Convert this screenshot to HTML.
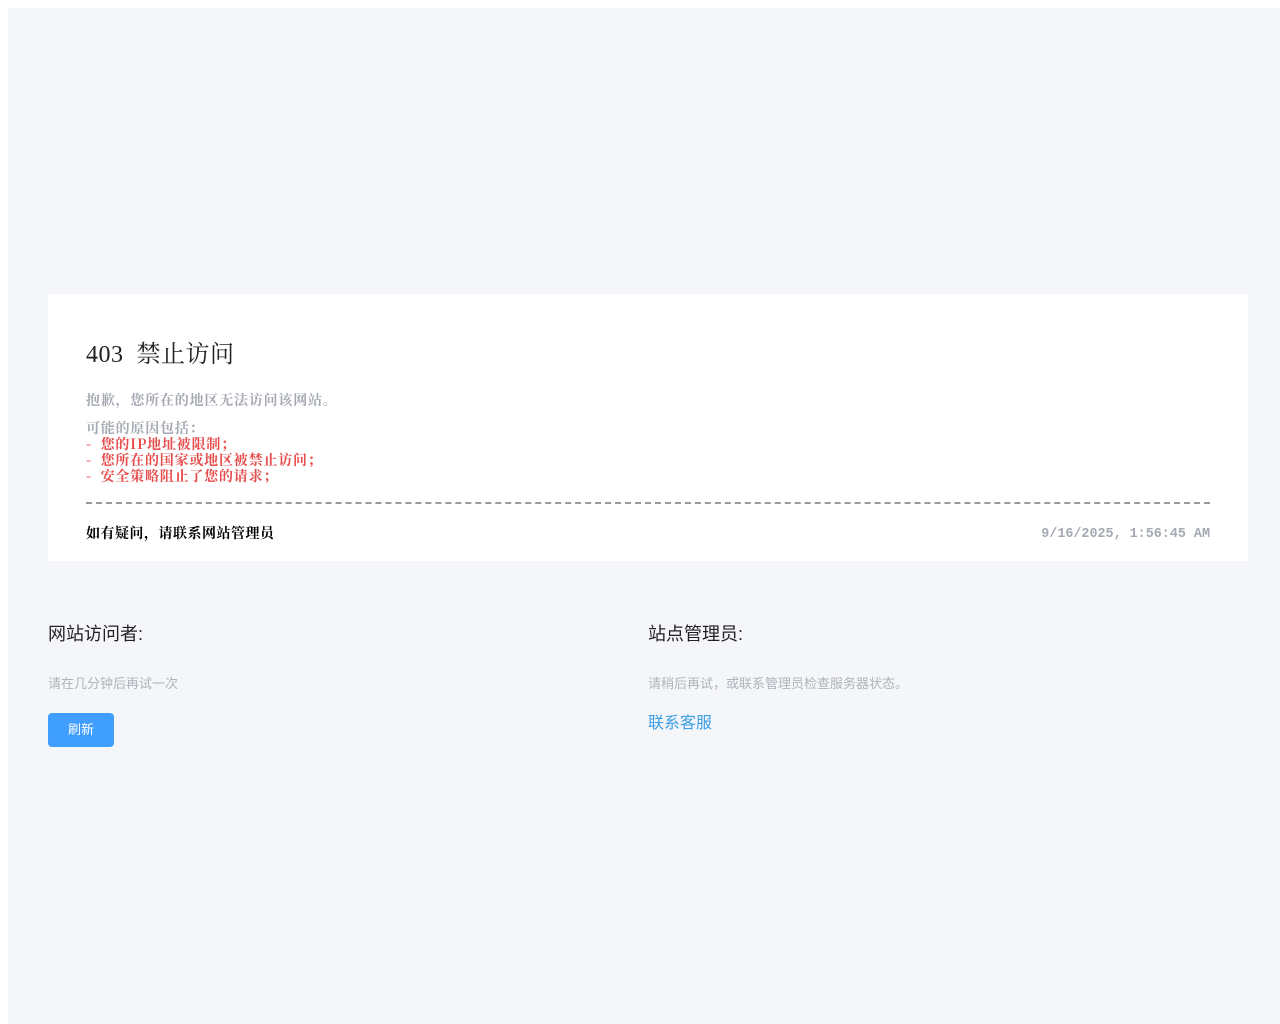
<!DOCTYPE html>
<html><head><meta charset="utf-8"><style>
html,body{margin:0;padding:0;background:#fff}
.wrap{position:absolute;left:8px;top:8px;width:1272px;height:1016px;background:#f5f6fa}
.card{position:absolute;left:48px;top:294px;width:1200px;height:267px;background:#fff}
.serif{font-family:"Noto Serif CJK SC","Liberation Serif",serif}
.t{position:absolute;white-space:nowrap}
h1{position:absolute;left:38px;top:40px;margin:0;font-weight:normal;font-size:24px;color:#222;font-family:"Liberation Serif","Noto Serif CJK SC",serif;letter-spacing:0.5px}
.g{color:#a5a9b3;font-weight:bold;font-size:14px;line-height:16px;letter-spacing:0.8px}
.r{color:#e74c4c;font-weight:bold;font-size:14px;line-height:16px;letter-spacing:0.8px}
.dash{position:absolute;left:38px;top:208px;width:1124px;border-top:2px dashed #9a9a9a}
.sans{font-family:"Liberation Sans","Noto Sans CJK SC",sans-serif}
.btn{position:absolute;left:48px;top:713px;width:66px;height:34px;background:#409eff;border-radius:4px;color:#fff;font-size:13px;line-height:34px;text-align:center}
</style></head><body>
<div class="wrap"></div>
<div class="card">
<h1>403&nbsp; 禁止访问</h1>
<div class="t serif g" style="left:38px;top:98px">抱歉，您所在的地区无法访问该网站。</div>
<div class="t serif g" style="left:38px;top:126px">可能的原因包括：</div>
<div class="t serif r" style="left:38px;top:142px">-&nbsp; 您的IP地址被限制；</div>
<div class="t serif r" style="left:38px;top:158px">-&nbsp; 您所在的国家或地区被禁止访问；</div>
<div class="t serif r" style="left:38px;top:174px">-&nbsp; 安全策略阻止了您的请求；</div>
<div class="dash"></div>
<div class="t serif" style="left:38px;top:229px;font-size:14px;font-weight:bold;color:#000;letter-spacing:0.5px">如有疑问，请联系网站管理员</div>
<div class="t" style="right:38px;top:233px;font-family:'Liberation Mono',monospace;font-size:13.4px;font-weight:bold;color:#a5a9b3">9/16/2025, 1:56:45 AM</div>
</div>
<div class="t sans" style="left:48px;top:620px;font-size:18px;color:#222">网站访问者:</div>
<div class="t sans" style="left:48px;top:673px;font-size:13px;color:#b0b3ba">请在几分钟后再试一次</div>
<div class="btn sans">刷新</div>
<div class="t sans" style="left:648px;top:620px;font-size:18px;color:#222">站点管理员:</div>
<div class="t sans" style="left:648px;top:673px;font-size:13px;color:#b0b3ba">请稍后再试，或联系管理员检查服务器状态。</div>
<div class="t sans" style="left:648px;top:709px;font-size:16px;color:#3a9ee6">联系客服</div>
</body></html>
